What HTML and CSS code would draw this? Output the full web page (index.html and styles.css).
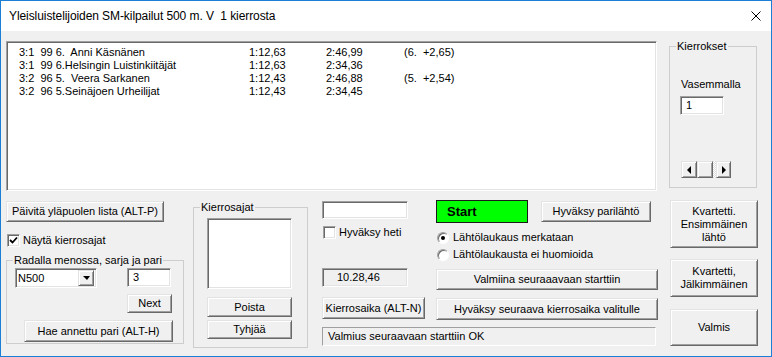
FILE: index.html
```html
<!DOCTYPE html>
<html lang="fi">
<head>
    <meta charset="UTF-8">
    <title>Yleisluistelijoiden SM-kilpailut</title>
    <link rel="stylesheet" href="styles.css">
</head>
<body>
    <div class="window">
        <!-- Title bar -->
        <div class="titlebar">
            <span class="title">Yleisluistelijoiden SM-kilpailut 500 m. V&nbsp; 1 kierrosta</span>
            <svg class="close" viewBox="0 0 10 10"><path d="M0.5 0.5 L9.5 9.5 M9.5 0.5 L0.5 9.5" stroke="#000" stroke-width="1"/></svg>
        </div>

        <div class="client">
            <!-- Results list and lap counter -->
            <div class="top-row">
                <div class="results sunken">
                    <div class="result"><span>3:1  99 6.  Anni Käsnänen</span><span>1:12,63</span><span>2:46,99</span><span>(6.  +2,65)</span></div>
                    <div class="result"><span>3:1  99 6.Helsingin Luistinkiitäjät</span><span>1:12,63</span><span>2:34,36</span><span></span></div>
                    <div class="result"><span>3:2  96 5.  Veera Sarkanen</span><span>1:12,43</span><span>2:46,88</span><span>(5.  +2,54)</span></div>
                    <div class="result"><span>3:2  96 5.Seinäjoen Urheilijat</span><span>1:12,43</span><span>2:34,45</span><span></span></div>
                </div>
                <fieldset class="group laps">
                    <legend>Kierrokset</legend>
                    <div class="laps-label">Vasemmalla</div>
                    <div class="sunken edit laps-edit">1</div>
                    <div class="hscroll">
                        <span class="sb-btn sb-left"><i class="arrow-left"></i></span>
                        <span class="sb-thumb"></span>
                        <span class="sb-track"></span>
                        <span class="sb-btn sb-right"><i class="arrow-right"></i></span>
                    </div>
                </fieldset>
            </div>

            <div class="bottom-row">
                <!-- Race selection -->
                <div class="col-race">
                    <button class="btn refresh">Päivitä yläpuolen lista (ALT-P)</button>
                    <label class="check show-laps">
                        <span class="cb"><svg viewBox="0 0 9 9"><path d="M1 4 L3.5 6.5 L8 1.5" fill="none" stroke="#000" stroke-width="1.8"/></svg></span>
                        Näytä kierrosajat
                    </label>
                    <fieldset class="group race">
                        <legend>Radalla menossa, sarja ja pari</legend>
                        <div class="race-row">
                            <div class="sunken combo"><span>N500</span><span class="combo-btn"><i class="arrow-down"></i></span></div>
                            <div class="sunken edit pair-edit">3</div>
                        </div>
                        <button class="btn next">Next</button>
                        <button class="btn fetch">Hae annettu pari (ALT-H)</button>
                    </fieldset>
                </div>

                <!-- Lap times -->
                <fieldset class="group splits">
                    <legend>Kierrosajat</legend>
                    <div class="sunken splits-list"></div>
                    <button class="btn splits-btn remove">Poista</button>
                    <button class="btn splits-btn clear">Tyhjää</button>
                </fieldset>

                <!-- Timing controls -->
                <div class="col-timing">
                    <div class="t-row t-row1">
                        <div class="sunken edit time-edit"></div>
                        <div class="start">Start</div>
                        <button class="btn pair-start">Hyväksy parilähtö</button>
                    </div>
                    <div class="t-row t-row2">
                        <label class="check accept"><span class="cb"></span>Hyväksy heti</label>
                        <div class="radios">
                            <label class="radio-line"><span class="radio on"></span>Lähtölaukaus merkataan</label>
                            <label class="radio-line"><span class="radio"></span>Lähtölaukausta ei huomioida</label>
                        </div>
                    </div>
                    <div class="t-row t-row3">
                        <div class="field clock">10.28,46</div>
                        <button class="btn wide ready">Valmiina seuraaavaan starttiin</button>
                    </div>
                    <div class="t-row t-row4">
                        <button class="btn lap">Kierrosaika (ALT-N)</button>
                        <button class="btn wide accept-lap">Hyväksy seuraava kierrosaika valitulle</button>
                    </div>
                    <div class="status">Valmius seuraavaan starttiin OK</div>
                </div>

                <!-- Quartet buttons -->
                <div class="col-quartet">
                    <button class="btn q1">Kvartetti.<br>Ensimmäinen<br>lähtö</button>
                    <button class="btn q2">Kvartetti,<br>Jälkimmäinen</button>
                    <button class="btn q3">Valmis</button>
                </div>
            </div>
        </div>
    </div>
</body>
</html>
```

FILE: styles.css
```css
/* Reset */
* {
    box-sizing: border-box;
    margin: 0;
    padding: 0;
}

body {
    background: #ffffff;
    font-family: "Liberation Sans", Arial, sans-serif;
    font-size: 11px;
    line-height: 13px;
    color: #000000;
}

/* Window frame */
.window {
    width: 772px;
    height: 357px;
    border: 1px solid #1c7fd6;
    background: #f0f0f0;
    display: flex;
    flex-direction: column;
}

.titlebar {
    height: 30px;
    flex: none;
    background: #ffffff;
    display: flex;
    align-items: center;
    justify-content: space-between;
    padding: 0 10px 0 8px;
}

.title {
    font-size: 12px;
    letter-spacing: -0.08px;
    white-space: pre;
}

.close {
    width: 10px;
    height: 10px;
}

.client {
    padding: 10px 0 0 5px;
}

/* Shared control looks */
.sunken {
    background: #ffffff;
    border: 1px solid;
    border-color: #a0a0a0 #ffffff #ffffff #a0a0a0;
    box-shadow: inset 1px 1px #696969, inset -1px -1px #e3e3e3;
}

.edit {
    display: flex;
    align-items: center;
    padding-left: 5px;
}

.btn {
    display: flex;
    align-items: center;
    justify-content: center;
    text-align: center;
    font: inherit;
    line-height: 13px;
    color: #000000;
    background: #f0f0f0;
    border: 1px solid;
    border-color: #e3e3e3 #696969 #696969 #e3e3e3;
    box-shadow: inset 1px 1px #ffffff, inset -1px -1px #a0a0a0;
    flex: none;
}

.group {
    border: 1px solid #cdcdcd;
    min-width: 0;
    flex: none;
}

.group legend {
    padding: 0 1px;
    margin-left: 6px;
    line-height: 13px;
}

.check {
    display: flex;
    align-items: center;
    white-space: nowrap;
}

.cb {
    width: 13px;
    height: 13px;
    margin-right: 3px;
    background: #ffffff;
    border: 1px solid;
    border-color: #a0a0a0 #ffffff #ffffff #a0a0a0;
    box-shadow: inset 1px 1px #696969, inset -1px -1px #e3e3e3;
    display: flex;
    align-items: center;
    justify-content: center;
}

.cb svg {
    width: 9px;
    height: 9px;
}

/* Top row */
.top-row {
    display: flex;
    align-items: flex-start;
}

.results {
    width: 651px;
    height: 150px;
    padding: 4px 0 0 12px;
    flex: none;
}

.result {
    display: grid;
    grid-template-columns: 230px 77px 78px auto;
    white-space: pre;
    height: 13px;
}

.laps {
    width: 88px;
    height: 148px;
    margin: -1px 0 0 12px;
}

.laps-label {
    margin: 25px 0 0 11px;
}

.laps-edit {
    width: 44px;
    height: 19px;
    margin: 5px 0 0 10px;
}

.hscroll {
    display: flex;
    height: 17px;
    margin: 46px 0 0 11px;
}

.sb-btn,
.sb-thumb {
    background: #f0f0f0;
    border: 1px solid;
    border-color: #e3e3e3 #696969 #696969 #e3e3e3;
    box-shadow: inset 1px 1px #ffffff, inset -1px -1px #a0a0a0;
    display: flex;
    align-items: center;
    justify-content: center;
}

.sb-left { width: 16px; }
.sb-thumb { width: 16px; }
.sb-right { width: 15px; }

.sb-track {
    width: 3px;
    background: repeating-conic-gradient(#ffffff 0 25%, #dcdcdc 0 50%) 0 0 / 2px 2px;
}

.arrow-left {
    border-top: 4px solid transparent;
    border-bottom: 4px solid transparent;
    border-right: 4px solid #000000;
}

.arrow-right {
    border-top: 4px solid transparent;
    border-bottom: 4px solid transparent;
    border-left: 4px solid #000000;
}

.arrow-down {
    border-left: 4px solid transparent;
    border-right: 3px solid transparent;
    border-top: 4px solid #000000;
}

/* Bottom row */
.bottom-row {
    display: flex;
    align-items: flex-start;
    margin-top: 9px;
}

.col-race {
    width: 178px;
    flex: none;
    display: flex;
    flex-direction: column;
}

.refresh {
    width: 158px;
    height: 21px;
    margin-top: 1px;
}

.show-laps {
    margin: 12px 0 0 1px;
}

.race {
    height: 90px;
    margin-top: 7px;
    display: flex;
    flex-direction: column;
}

.race-row {
    display: flex;
    margin: 1px 0 0 8px;
}

.combo {
    width: 82px;
    height: 20px;
    display: flex;
    align-items: center;
    justify-content: space-between;
    padding: 2px 2px 2px 2px;
}

.combo-btn {
    width: 16px;
    height: 16px;
    background: #f0f0f0;
    border: 1px solid;
    border-color: #e3e3e3 #696969 #696969 #e3e3e3;
    box-shadow: inset 1px 1px #ffffff, inset -1px -1px #a0a0a0;
    display: flex;
    align-items: center;
    justify-content: center;
}

.pair-edit {
    width: 44px;
    height: 19px;
    margin-left: 30px;
}

.next {
    width: 45px;
    height: 19px;
    margin: 6px 0 0 120px;
}

.fetch {
    width: 149px;
    height: 22px;
    margin: 7px 0 0 17px;
}

.splits {
    width: 115px;
    height: 147px;
    margin: 1px 0 0 9px;
    display: flex;
    flex-direction: column;
}

.splits-list {
    width: 85px;
    height: 71px;
    margin: 4px 0 0 13px;
}

.splits-btn {
    width: 85px;
    margin-left: 13px;
}

.remove {
    height: 20px;
    margin-top: 8px;
}

.clear {
    height: 19px;
    margin-top: 3px;
}

/* Timing column */
.col-timing {
    width: 336px;
    margin-left: 14px;
    flex: none;
    display: flex;
    flex-direction: column;
}

.t-row {
    display: flex;
    align-items: flex-start;
}

.t-row1 {
    height: 23px;
}

.time-edit {
    width: 86px;
    height: 18px;
    margin-top: 1px;
}

.start {
    width: 92px;
    height: 23px;
    margin-left: 28px;
    background: #00ff00;
    border: 1px solid #1a1a1a;
    font-size: 13px;
    font-weight: bold;
    display: flex;
    align-items: center;
    padding-left: 10px;
}

.pair-start {
    width: 110px;
    height: 21px;
    margin: 1px 0 0 13px;
}

.t-row2 {
    height: 45px;
}

.accept {
    width: 114px;
    margin-top: 3px;
    padding-left: 1px;
}

.radios {
    display: flex;
    flex-direction: column;
    gap: 4px;
    margin-top: 8px;
}

.radio-line {
    display: flex;
    align-items: center;
    gap: 4px;
    margin-left: 1px;
}

.radio {
    width: 12px;
    height: 12px;
    border-radius: 50%;
    background: #ffffff;
    border: 1px solid;
    border-color: #a0a0a0 #ffffff #ffffff #a0a0a0;
    box-shadow: inset 1px 1px #696969;
    display: flex;
    align-items: center;
    justify-content: center;
}

.radio.on::after {
    content: "";
    width: 4px;
    height: 4px;
    border-radius: 50%;
    background: #000000;
}

.t-row3 {
    height: 22px;
}

.field {
    background: #f0f0f0;
    border: 1px solid;
    border-color: #a0a0a0 #ffffff #ffffff #a0a0a0;
    box-shadow: inset 1px 1px #696969, inset -1px -1px #e3e3e3;
    display: flex;
    align-items: center;
}

.clock {
    width: 86px;
    height: 19px;
    margin-right: 28px;
    padding-left: 14px;
}

.wide {
    width: 222px;
    height: 21px;
}

.ready {
    margin-top: 1px;
}

.t-row4 {
    margin-top: 7px;
    height: 23px;
}

.lap {
    width: 103px;
    height: 22px;
    margin-right: 11px;
}

.accept-lap {
    height: 22px;
    margin-top: 1px;
}

.status {
    width: 334px;
    height: 19px;
    margin-top: 7px;
    padding-left: 5px;
    background: #f0f0f0;
    border: 1px solid;
    border-color: #a0a0a0 #ffffff #ffffff #a0a0a0;
    display: flex;
    align-items: center;
}

/* Quartet column */
.col-quartet {
    width: 88px;
    margin-left: 12px;
    flex: none;
    display: flex;
    flex-direction: column;
}

.col-quartet .btn {
    width: 88px;
}

.q1 { height: 48px; }
.q2 { height: 38px; margin-top: 11px; }
.q3 { height: 37px; margin-top: 12px; }
```
